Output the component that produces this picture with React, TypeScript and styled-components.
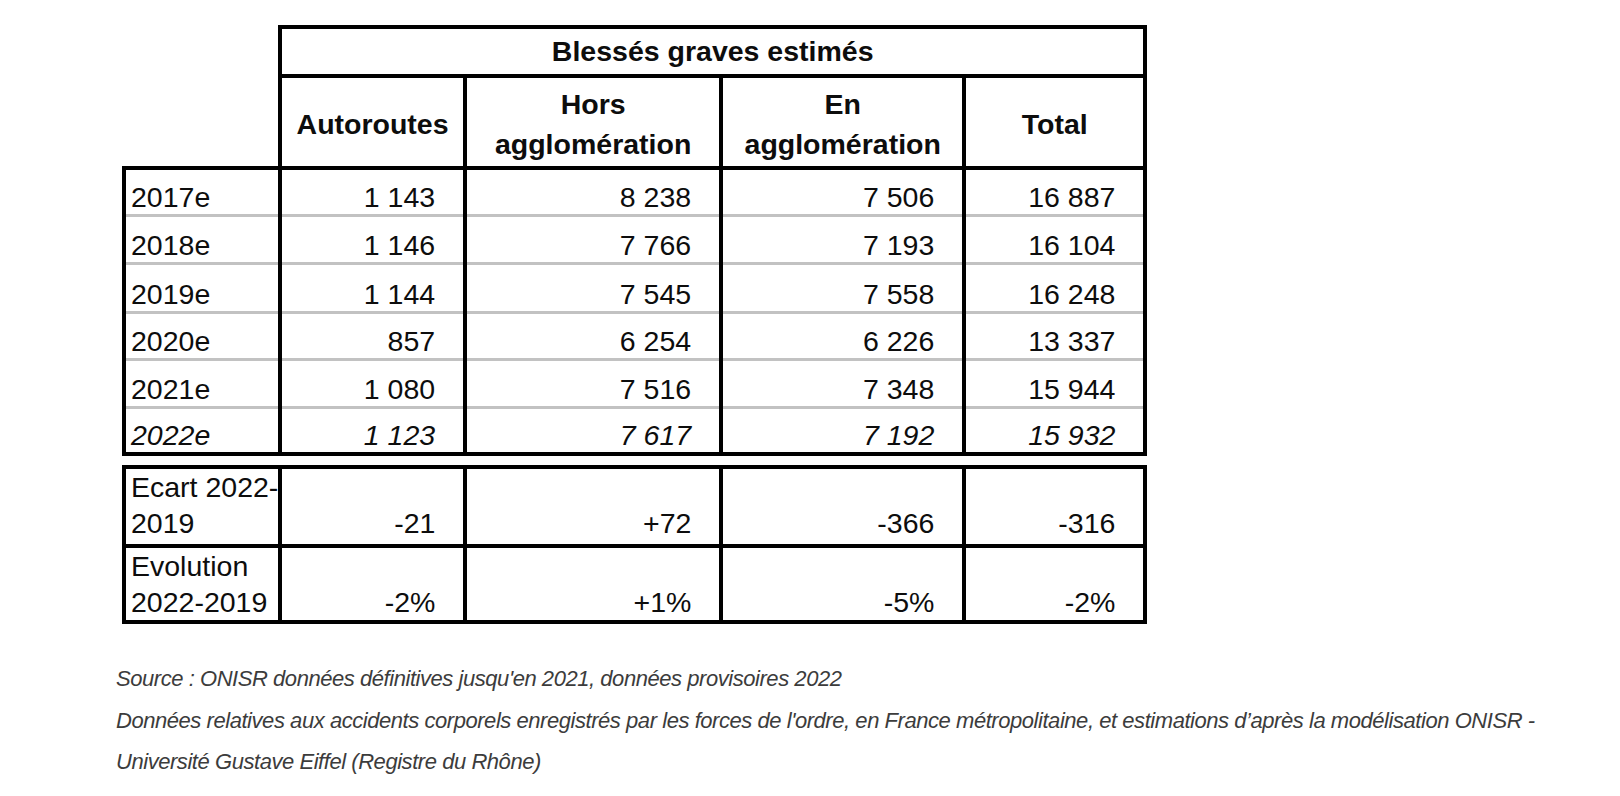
import React from "react";
import styled, { createGlobalStyle } from "styled-components";

const GlobalStyle = createGlobalStyle`
  html, body {
    margin: 0;
    padding: 0;
    background: #ffffff;
  }
  body {
    font-family: "Liberation Sans", Arial, sans-serif;
  }
`;

const Page = styled.main`
  box-sizing: border-box;
  width: 1620px;
  padding: 25px 0 0 116px;
`;

const Sheet = styled.div`
  display: flex;
  flex-direction: column;
  gap: 9px;
  margin-left: 6px;
  width: max-content;
`;

const Grid = styled.table`
  border-collapse: collapse;
  table-layout: fixed;
  font-family: "Liberation Sans", Arial, sans-serif;
  font-size: 28.5px;
  color: #0d0d0d;
`;

const Row = styled.tr<{ $h: number }>`
  height: ${(p) => p.$h}px;
`;

const Blank = styled.td`
  border: none;
  padding: 0;
`;

const Head = styled.th<{ $lh?: number; $pt?: number }>`
  border: 4px solid #000;
  padding: ${(p) => p.$pt ?? 0}px 4px 0;
  font-weight: 700;
  text-align: center;
  vertical-align: middle;
  line-height: ${(p) => (p.$lh ? `${p.$lh}px` : "normal")};
`;

type CellProps = {
  $top?: boolean;
  $last?: boolean;
  $italic?: boolean;
  $lh?: number;
  $pb?: number;
};

const Label = styled.td<CellProps>`
  border-left: 4px solid #000;
  border-right: 4px solid #000;
  border-top: ${(p) => (p.$top ? "4px solid #000" : "none")};
  border-bottom: ${(p) => (p.$last ? "4px solid #000" : "3px solid #c2c2c2")};
  padding: 0 0 ${(p) => p.$pb ?? 0}px 5px;
  text-align: left;
  vertical-align: bottom;
  white-space: nowrap;
  overflow: visible;
  font-style: ${(p) => (p.$italic ? "italic" : "normal")};
  line-height: ${(p) => (p.$lh ? `${p.$lh}px` : "normal")};
`;

const Num = styled.td<CellProps>`
  border-left: 4px solid #000;
  border-right: 4px solid #000;
  border-top: ${(p) => (p.$top ? "4px solid #000" : "none")};
  border-bottom: ${(p) => (p.$last ? "4px solid #000" : "3px solid #c2c2c2")};
  padding: 0 28px ${(p) => p.$pb ?? 0}px 0;
  text-align: right;
  vertical-align: bottom;
  white-space: nowrap;
  font-style: ${(p) => (p.$italic ? "italic" : "normal")};
  line-height: ${(p) => (p.$lh ? `${p.$lh}px` : "normal")};
`;

const Notes = styled.div`
  display: flex;
  flex-direction: column;
  margin-top: 34px;
  width: 1470px;
`;

const Note = styled.p`
  margin: 0;
  font-family: "Liberation Sans", Arial, sans-serif;
  font-style: italic;
  font-size: 22px;
  letter-spacing: -0.45px;
  line-height: 41.5px;
  color: #3c3c3c;
`;

const widths = [156, 185, 256, 243, 181];

const Cols: React.FC = () => (
  <colgroup>
    {widths.map((w, i) => (
      <col key={i} style={{ width: w }} />
    ))}
  </colgroup>
);

const data: string[][] = [
  ["2017e", "1 143", "8 238", "7 506", "16 887"],
  ["2018e", "1 146", "7 766", "7 193", "16 104"],
  ["2019e", "1 144", "7 545", "7 558", "16 248"],
  ["2020e", "857", "6 254", "6 226", "13 337"],
  ["2021e", "1 080", "7 516", "7 348", "15 944"],
  ["2022e", "1 123", "7 617", "7 192", "15 932"],
];

const rowHeights = [47, 48, 49, 47, 48, 47];

const lower: { label: [string, string]; values: string[]; h: number; pb: number }[] = [
  { label: ["Ecart 2022-", "2019"], values: ["-21", "+72", "-366", "-316"], h: 79, pb: 3 },
  { label: ["Evolution", "2022-2019"], values: ["-2%", "+1%", "-5%", "-2%"], h: 76, pb: 0 },
];

export default function App() {
  return (
    <>
      <GlobalStyle />
      <Page>
        <Sheet>
          <Grid>
            <Cols />
            <thead>
              <Row $h={49}>
                <Blank />
                <Head colSpan={4}>Blessés graves estimés</Head>
              </Row>
              <Row $h={92}>
                <Blank />
                <Head $pt={4}>Autoroutes</Head>
                <Head $lh={40} $pt={4}>
                  Hors
                  <br />
                  agglomération
                </Head>
                <Head $lh={40} $pt={4}>
                  En
                  <br />
                  agglomération
                </Head>
                <Head $pt={4}>Total</Head>
              </Row>
            </thead>
            <tbody>
              {data.map((r, i) => {
                const first = i === 0;
                const last = i === data.length - 1;
                return (
                  <Row key={r[0]} $h={rowHeights[i]}>
                    <Label $top={first} $last={last} $italic={last}>
                      {r[0]}
                    </Label>
                    {r.slice(1).map((v, j) => (
                      <Num key={j} $top={first} $last={last} $italic={last}>
                        {v}
                      </Num>
                    ))}
                  </Row>
                );
              })}
            </tbody>
          </Grid>
          <Grid>
            <Cols />
            <tbody>
              {lower.map((r) => (
                <Row key={r.label[0]} $h={r.h}>
                  <Label $top $last $lh={36} $pb={r.pb}>
                    {r.label[0]}
                    <br />
                    {r.label[1]}
                  </Label>
                  {r.values.map((v, j) => (
                    <Num key={j} $top $last $lh={36} $pb={r.pb}>
                      {v}
                    </Num>
                  ))}
                </Row>
              ))}
            </tbody>
          </Grid>
        </Sheet>
        <Notes>
          <Note>Source : ONISR données définitives jusqu'en 2021, données provisoires 2022</Note>
          <Note>
            Données relatives aux accidents corporels enregistrés par les forces de l'ordre, en France
            métropolitaine, et estimations d’après la modélisation ONISR - Université Gustave Eiffel
            (Registre du Rhône)
          </Note>
        </Notes>
      </Page>
    </>
  );
}
